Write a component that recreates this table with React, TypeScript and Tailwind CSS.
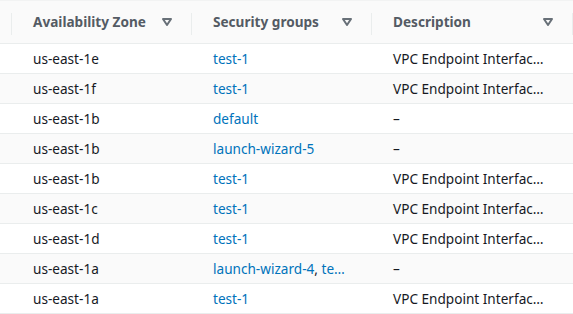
import React from "react";

type Row = {
    zone: string;
    groups: string[];
    description: string;
};

const VPCE = "VPC Endpoint Interfac…";

const rows: Row[] = [
    { zone: "us-east-1e", groups: ["test-1"], description: VPCE },
    { zone: "us-east-1f", groups: ["test-1"], description: VPCE },
    { zone: "us-east-1b", groups: ["default"], description: "–" },
    { zone: "us-east-1b", groups: ["launch-wizard-5"], description: "–" },
    { zone: "us-east-1b", groups: ["test-1"], description: VPCE },
    { zone: "us-east-1c", groups: ["test-1"], description: VPCE },
    { zone: "us-east-1d", groups: ["test-1"], description: VPCE },
    { zone: "us-east-1a", groups: ["launch-wizard-4", "te…"], description: "–" },
    { zone: "us-east-1a", groups: ["test-1"], description: VPCE },
];

const SortIcon = () => (
    <svg width="10" height="8" viewBox="0 0 10 8" className="shrink-0">
        <path d="M1 1 H9 L5 7 Z" fill="none" stroke="#687078" strokeWidth="2" strokeLinejoin="round" />
    </svg>
);

const HeaderCell = ({ label }: { label: string }) => (
    <div className="relative flex items-center justify-between pl-[21px] pr-[20px] h-full">
        <span className="font-bold text-[#545b64] whitespace-nowrap">{label}</span>
        <SortIcon />
        <div className="absolute right-0 top-[12px] h-[22px] w-px bg-[#eaeded]"></div>
    </div>
);

export default function App() {
    return (
        <div className="w-[573px] h-[314px] overflow-hidden bg-white text-[13.6px] font-['Noto_Sans',sans-serif]">
            {/* Header */}
            <div className="grid grid-cols-[12px_180px_180px_201px] h-[44px] bg-[#fafafa] border-t border-[#f2f3f3] border-b border-b-[#eaeded]">
                <div className="relative h-full">
                    <div className="absolute right-0 top-[12px] h-[22px] w-px bg-[#eaeded]"></div>
                </div>
                <HeaderCell label="Availability Zone" />
                <HeaderCell label="Security groups" />
                <HeaderCell label="Description" />
            </div>

            {/* Body */}
            {rows.map((r, i) => (
                <div
                    key={i}
                    className={`grid grid-cols-[12px_180px_180px_201px] h-[30px] pt-px items-center border-b border-[#eaeded] ${i % 2 === 1 ? "bg-[#fafafa]" : "bg-white"}`}
                >
                    <div></div>
                    <div className="pl-[21px] pr-[10px] text-[#16191f] whitespace-nowrap">{r.zone}</div>
                    <div className="pl-[21px] pr-[10px] whitespace-nowrap text-[#0073bb]">
                        {r.groups.map((g, j) => (
                            <span key={g}>
                                {g}
                                {j < r.groups.length - 1 && <span className="text-[#16191f]">, </span>}
                            </span>
                        ))}
                    </div>
                    <div className="pl-[21px] pr-[10px] text-[#16191f] whitespace-nowrap">{r.description}</div>
                </div>
            ))}
        </div>
    );
}
